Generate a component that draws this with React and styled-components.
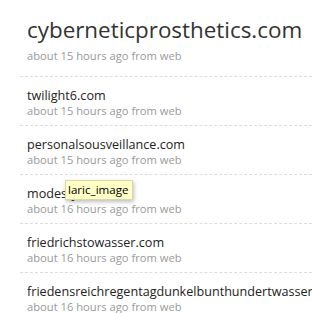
import React from 'react'
import styled, { createGlobalStyle } from 'styled-components'

const GlobalStyle = createGlobalStyle`
  html, body {
    margin: 0;
    padding: 0;
    background: #fff;
  }
  body {
    font-family: 'Open Sans', 'Liberation Sans', sans-serif;
    color: #333;
    overflow: hidden;
  }
`

const Page = styled.div`
  width: 312px;
  height: 313px;
  padding: 15px 0 0 20px;
  box-sizing: border-box;
  overflow: hidden;
`

const Latest = styled.div`
  padding: 0 0 14px 7px;
`

const BigText = styled.h1`
  margin: 0;
  font-size: 22.4px;
  font-weight: normal;
  line-height: 30px;
  color: #333;
  white-space: nowrap;
`

const Meta = styled.div`
  font-size: 11.2px;
  line-height: 13px;
  color: #999;
  margin-top: ${p => (p.$big ? '4px' : '0')};
  white-space: nowrap;
`

const List = styled.ul`
  list-style: none;
  margin: 0;
  padding: 0;
`

const Item = styled.li`
  position: relative;
  border-top: 1px dashed #ddd;
  padding: 10px 0 6px 7px;
  height: 32px;
`

const Name = styled.span`
  font-size: 12.6px;
  line-height: 17px;
  color: #222;
  white-space: nowrap;
  display: block;
`

const Tooltip = styled.div`
  position: absolute;
  left: 45px;
  top: 5px;
  padding: 1px 3px 1px 2px;
  background: #ffffc6;
  border: 1px solid #d8d8a8;
  box-shadow: 1px 2px 4px rgba(0, 0, 0, 0.25);
  font-size: 11.6px;
  line-height: 16px;
  color: #000;
  white-space: nowrap;
`

const items = [
  { name: 'twilight6.com', time: 'about 15 hours ago' },
  { name: 'personalsousveillance.com', time: 'about 15 hours ago' },
  { name: 'modesty.com', time: 'about 16 hours ago', tip: 'laric_image' },
  { name: 'friedrichstowasser.com', time: 'about 16 hours ago' },
  { name: 'friedensreichregentagdunkelbunthundertwasser', time: 'about 16 hours ago' }
]

export default function App() {
  return (
    <Page>
      <GlobalStyle />
      <Latest>
        <BigText>cyberneticprosthetics.com</BigText>
        <Meta $big>about 15 hours ago from web</Meta>
      </Latest>
      <List>
        {items.map(item => (
          <Item key={item.name}>
            <Name>{item.name}</Name>
            <Meta>{item.time} from web</Meta>
            {item.tip && <Tooltip>{item.tip}</Tooltip>}
          </Item>
        ))}
      </List>
    </Page>
  )
}
